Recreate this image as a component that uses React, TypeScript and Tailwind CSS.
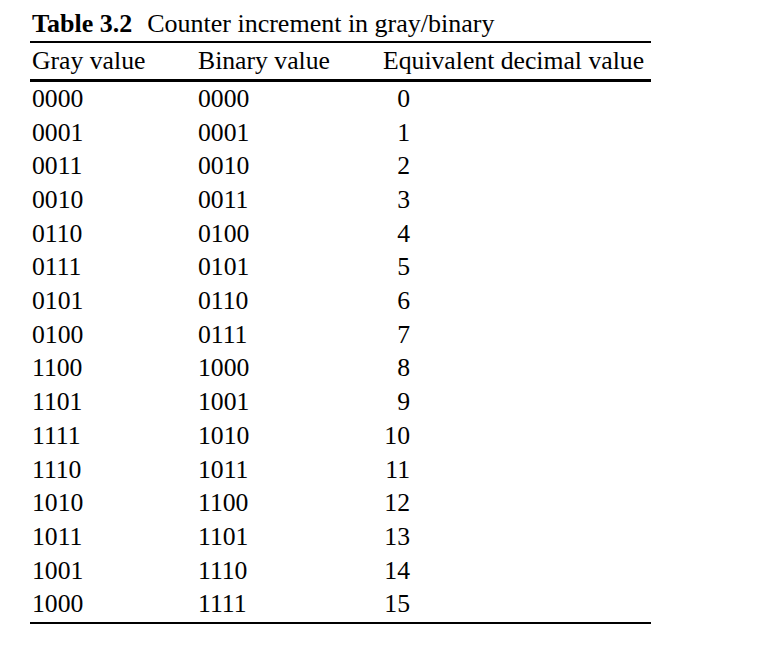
const rows: [string, string, number][] = [
  ["0000", "0000", 0],
  ["0001", "0001", 1],
  ["0011", "0010", 2],
  ["0010", "0011", 3],
  ["0110", "0100", 4],
  ["0111", "0101", 5],
  ["0101", "0110", 6],
  ["0100", "0111", 7],
  ["1100", "1000", 8],
  ["1101", "1001", 9],
  ["1111", "1010", 10],
  ["1110", "1011", 11],
  ["1010", "1100", 12],
  ["1011", "1101", 13],
  ["1001", "1110", 14],
  ["1000", "1111", 15],
];

const App = () => {
  return (
    <div className="min-h-[653px] w-[761px] bg-white pl-[30px] font-['Liberation_Serif',serif] text-[25.7px] text-black">
      <div className="w-[621px]">
        {/* caption */}
        <div className="flex h-[41px] items-end pb-[2px] pl-[2px] text-[26px] leading-[30px]">
          <span className="font-bold">Table 3.2</span>
          <span className="ml-[15px]">Counter increment in gray/binary</span>
        </div>
        <div className="h-[2px] bg-black" />

        {/* header */}
        <div className="flex h-[36px] items-center pl-[2px] leading-none">
          <div className="w-[166px]">Gray value</div>
          <div className="w-[185px]">Binary value</div>
          <div>Equivalent decimal value</div>
        </div>
        <div className="h-[3px] bg-black" />

        {/* body */}
        <div className="pb-[1px]">
          {rows.map(([gray, bin, dec]) => (
            <div key={gray} className="flex h-[33.7px] items-center pl-[2px] leading-none">
              <div className="w-[166px]">{gray}</div>
              <div className="w-[185px]">{bin}</div>
              <div className="w-[27px] text-right">{dec}</div>
            </div>
          ))}
        </div>
        <div className="h-[2px] bg-black" />
      </div>
    </div>
  );
};

export default App;
